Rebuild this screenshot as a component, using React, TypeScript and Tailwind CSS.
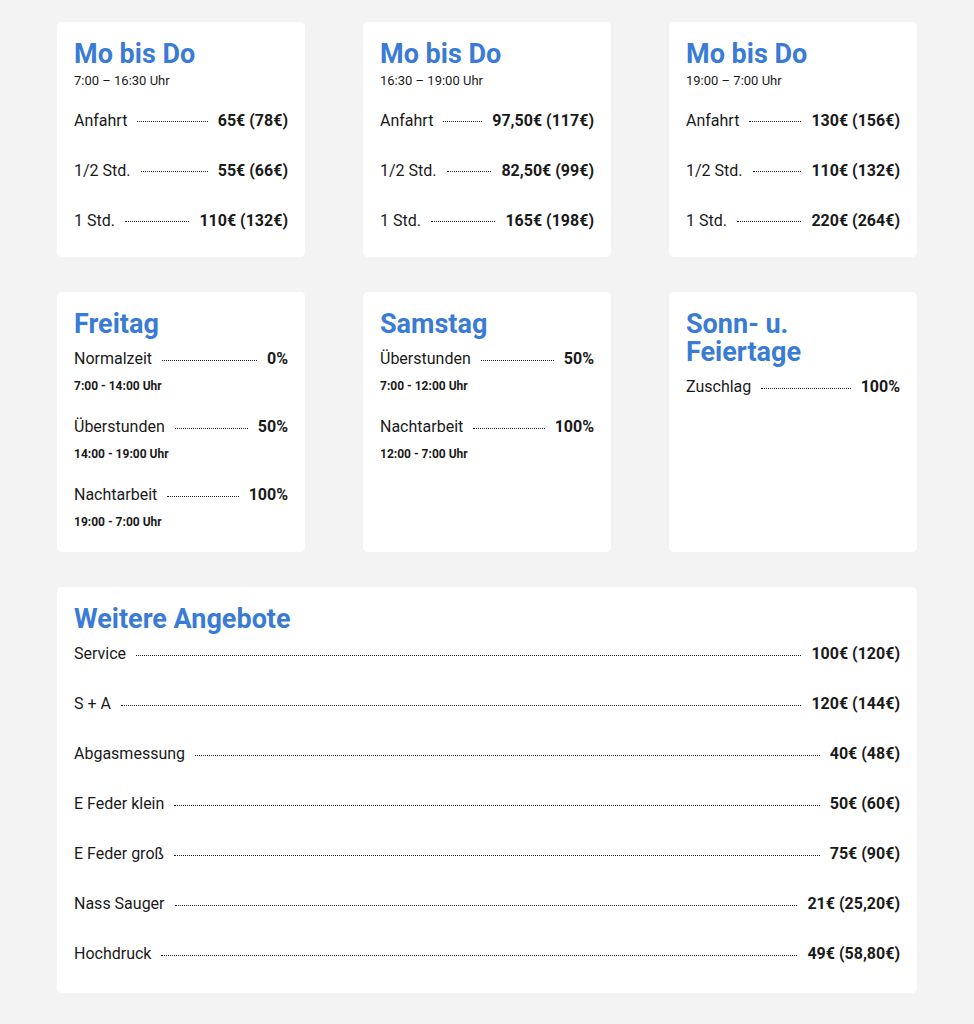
import React from "react";

type Row = { label: string; value: string; note?: string };

const Leader = ({ label, value, note }: Row) => (
  <div className={note ? "h-[68px]" : "h-[50px]"}>
    <div className="flex items-center h-[22px]">
      <span className="whitespace-nowrap">{label}</span>
      <span className="flex-1 mx-2.5 border-b border-dotted border-[#222] translate-y-[1px]" />
      <span className="font-bold whitespace-nowrap">{value}</span>
    </div>
    {note && <div className="text-[12px] font-bold mt-[7px]">{note}</div>}
  </div>
);

const Card = ({ title, sub, rows, className = "" }: { title: React.ReactNode; sub?: string; rows: Row[]; className?: string }) => (
  <div className={"bg-white rounded-[5px] px-[17px] pt-[18px] " + className}>
    <h2 className="text-[27px] leading-[28px] font-bold text-[#3a7bd5]">{title}</h2>
    {sub ? <div className="text-[13px] mt-[3px] mb-[19px]">{sub}</div> : <div className="h-[10px]" />}
    {rows.map((r) => (
      <Leader key={r.label} {...r} />
    ))}
  </div>
);

const moDo = [
  { sub: "7:00 – 16:30 Uhr", v: ["65€ (78€)", "55€ (66€)", "110€ (132€)"] },
  { sub: "16:30 – 19:00 Uhr", v: ["97,50€ (117€)", "82,50€ (99€)", "165€ (198€)"] },
  { sub: "19:00 – 7:00 Uhr", v: ["130€ (156€)", "110€ (132€)", "220€ (264€)"] },
];

const weitere: Row[] = [
  { label: "Service", value: "100€ (120€)" },
  { label: "S + A", value: "120€ (144€)" },
  { label: "Abgasmessung", value: "40€ (48€)" },
  { label: "E Feder klein", value: "50€ (60€)" },
  { label: "E Feder groß", value: "75€ (90€)" },
  { label: "Nass Sauger", value: "21€ (25,20€)" },
  { label: "Hochdruck", value: "49€ (58,80€)" },
];

export default function App() {
  return (
    <div className="h-[1024px] overflow-hidden bg-[#f3f3f3] px-[57px] pt-[22px] text-[16px] text-[#1a1a1a]" style={{ fontFamily: "Roboto, 'Liberation Sans', sans-serif" }}>
      <div className="grid grid-cols-3 gap-x-[58px] gap-y-[35px]">
        {moDo.map((m, i) => (
          <Card
            key={i}
            title="Mo bis Do"
            sub={m.sub}
            className="h-[235px]"
            rows={[
              { label: "Anfahrt", value: m.v[0] },
              { label: "1/2 Std.", value: m.v[1] },
              { label: "1 Std.", value: m.v[2] },
            ]}
          />
        ))}
        <Card
          title="Freitag"
          className="h-[260px]"
          rows={[
            { label: "Normalzeit", value: "0%", note: "7:00 - 14:00 Uhr" },
            { label: "Überstunden", value: "50%", note: "14:00 - 19:00 Uhr" },
            { label: "Nachtarbeit", value: "100%", note: "19:00 - 7:00 Uhr" },
          ]}
        />
        <Card
          title="Samstag"
          className="h-[260px]"
          rows={[
            { label: "Überstunden", value: "50%", note: "7:00 - 12:00 Uhr" },
            { label: "Nachtarbeit", value: "100%", note: "12:00 - 7:00 Uhr" },
          ]}
        />
        <Card
          title={<>Sonn- u.<br />Feiertage</>}
          className="h-[260px]"
          rows={[{ label: "Zuschlag", value: "100%" }]}
        />
        <div className="col-span-3 bg-white rounded-[5px] px-[17px] pt-[18px] h-[406px]">
          <h2 className="text-[27px] leading-[28px] font-bold text-[#3a7bd5]">Weitere Angebote</h2>
          <div className="h-[10px]" />
          {weitere.map((r) => (
            <Leader key={r.label} {...r} />
          ))}
        </div>
      </div>
    </div>
  );
}
